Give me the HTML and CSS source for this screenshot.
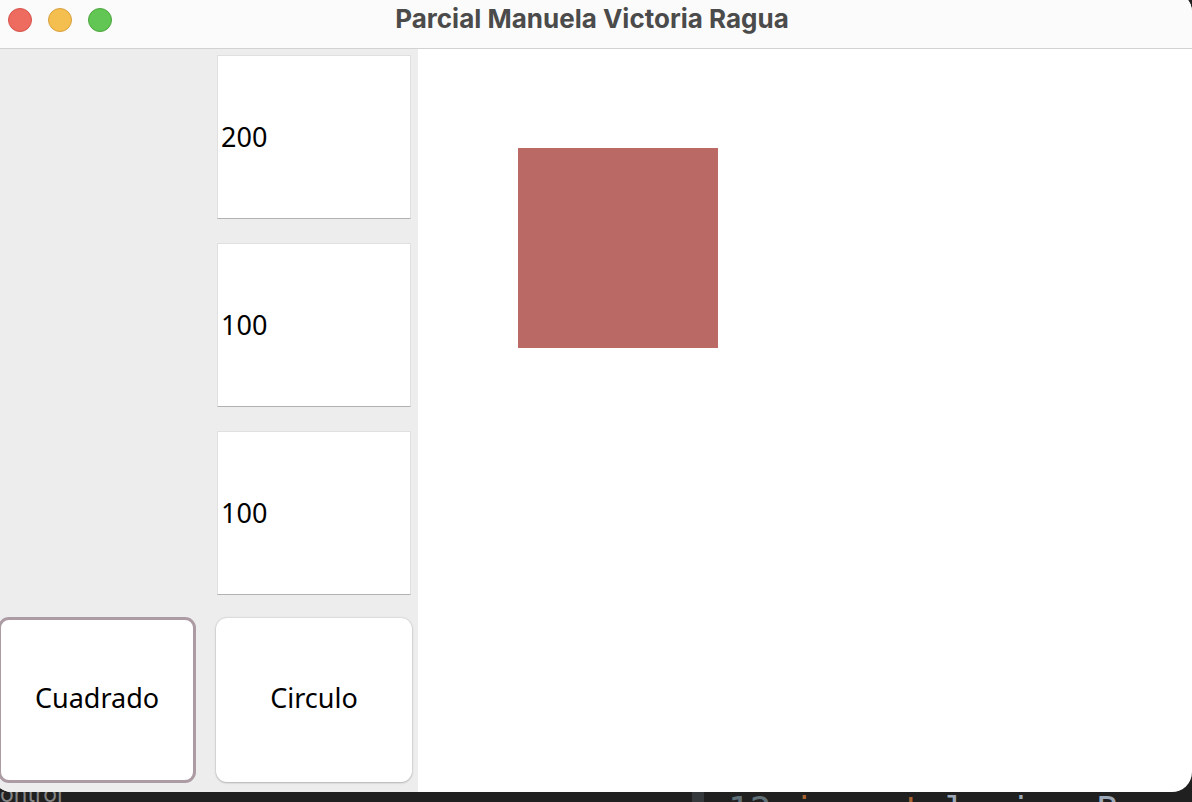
FILE: index.html
```html
<!DOCTYPE html>
<html lang="es">
<head>
<meta charset="utf-8">
<title>Parcial Manuela Victoria Ragua</title>
<link rel="stylesheet" href="styles.css">
</head>
<body>
<div class="desktop">
  <main class="window">
    <header class="titlebar">
      <div class="lights">
        <button class="light light-close" type="button" aria-label="Cerrar"></button>
        <button class="light light-minimize" type="button" aria-label="Minimizar"></button>
        <button class="light light-zoom" type="button" aria-label="Ampliar"></button>
      </div>
      <h1 class="title">Parcial Manuela Victoria Ragua</h1>
    </header>
    <div class="content">
      <form class="controls">
        <input class="field" type="text" value="200" aria-label="Lado">
        <input class="field" type="text" value="100" aria-label="X">
        <input class="field" type="text" value="100" aria-label="Y">
        <button class="action action-focused" type="button">Cuadrado</button>
        <button class="action" type="button">Circulo</button>
      </form>
      <section class="canvas"><div class="square"></div></section>
    </div>
  </main>
  <footer class="editor">
    <span class="tree">ontrol</span>
    <span class="gutter"></span>
    <code class="code"><span class="line-number">12</span> <span class="keyword">import</span> logica.Base</code>
  </footer>
</div>
</body>
</html>
```

FILE: styles.css
```css
* {
  box-sizing: border-box;
}

body {
  margin: 0;
  background: #202020;
}

.desktop {
  display: flex;
  flex-direction: column;
  height: 100vh;
  overflow: hidden;
  background: #202020;
}

/* The window runs past the top and left edges of the desktop. */
.window {
  display: flex;
  flex: 1;
  flex-direction: column;
  min-height: 0;
  margin: -8px 0 0 -8px;
  overflow: hidden;
  border-radius: 20px;
  background: #fff;
}

.titlebar {
  display: grid;
  grid-template-columns: 1fr auto 1fr;
  align-items: center;
  height: 57px;
  padding: 0 16px;
  border-bottom: 1px solid #d2d2d2;
  background: #fbfbfb;
}

.lights {
  display: flex;
  gap: 16px;
}

.light {
  width: 24px;
  height: 24px;
  padding: 0;
  border: 1px solid;
  border-radius: 50%;
}

.light-close {
  border-color: #d5534a;
  background: #ed6b5f;
}

.light-minimize {
  border-color: #d9a040;
  background: #f5bf4f;
}

.light-zoom {
  border-color: #4ca63c;
  background: #62c655;
}

.title {
  margin: 0;
  padding-bottom: 2px;
  color: #4b4b4b;
  font: 700 26px/32px Inter, sans-serif;
}

.content {
  display: flex;
  flex: 1;
  min-height: 0;
}

.controls {
  display: grid;
  grid-template-columns: 1fr 1fr;
  grid-template-rows: repeat(4, 1fr);
  gap: 24px 22px;
  width: 426px;
  padding: 6px 6px 9px;
  background: #ededed;
}

.field,
.action {
  min-width: 0;
  color: #000;
  font: 27px/36px "Noto Sans", sans-serif;
}

.field {
  grid-column: 2;
  margin: 0 1px;
  padding: 0 3px;
  border: 1px solid #e0e0e0;
  border-bottom-color: #b2b2b2;
  border-radius: 0;
  background: #fff;
}

.action {
  margin: -1px 0 1px;
  padding: 0 0 4px;
  border: 0;
  border-radius: 11px;
  background: #fff;
  box-shadow: 0 0 2px #b8b8b8, 0 1px 2px #b8b8b8;
}

.action-focused {
  margin: -2px -2px 0 0;
  border: 3px solid #ad9ba4;
  box-shadow: none;
}

.canvas {
  flex: 1;
  padding: 99px 100px;
}

.square {
  width: 200px;
  height: 200px;
  background: #ba6964;
}

.editor {
  display: flex;
  height: 10px;
  overflow: hidden;
  color: #9da9b8;
}

.tree {
  width: 692px;
  margin-top: -10px;
  color: #858585;
  font: 23px/24px Inter, sans-serif;
}

.gutter {
  width: 12px;
  background: #35393b;
}

.code {
  padding-left: 24px;
  font: 36px/36px "DejaVu Sans Mono", monospace;
  white-space: pre;
}

.line-number {
  color: #607078;
}

.keyword {
  color: #a96532;
}
```
